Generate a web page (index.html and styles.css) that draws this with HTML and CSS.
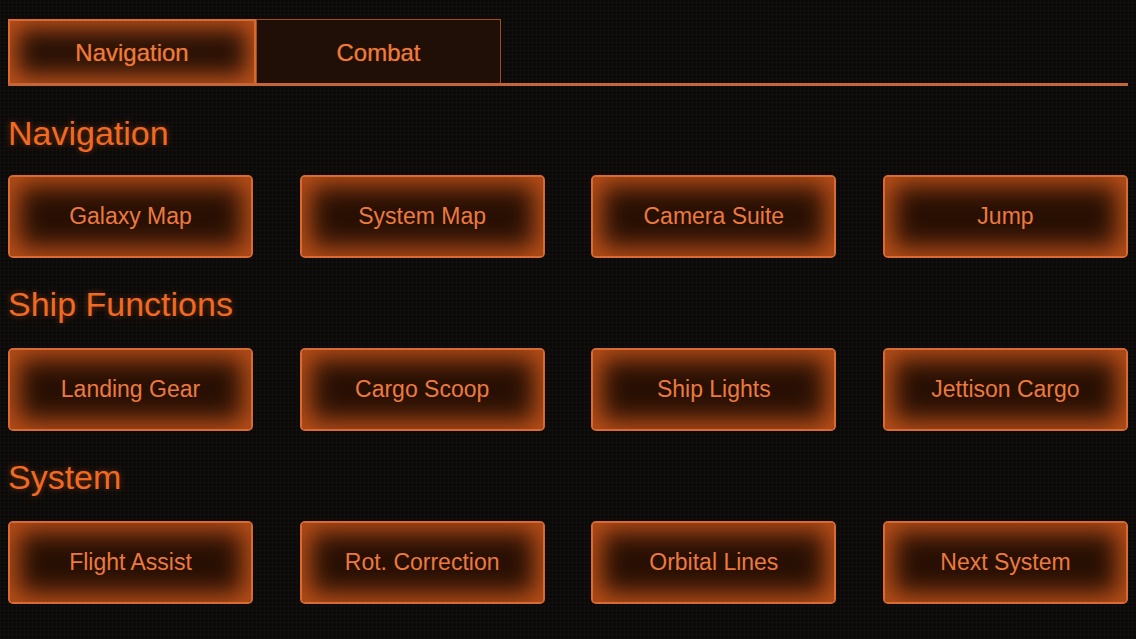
FILE: index.html
```html
<!DOCTYPE html>
<html>
<head>
<meta charset="utf-8">
<link rel="stylesheet" href="styles.css">
</head>
<body>
<div class="page">
  <div class="tabs">
    <div class="tab active">Navigation</div>
    <div class="tab">Combat</div>
  </div>
  <section class="section">
    <h2 class="heading first">Navigation</h2>
    <div class="grid">
      <div class="btn">Galaxy Map</div>
      <div class="btn">System Map</div>
      <div class="btn">Camera Suite</div>
      <div class="btn">Jump</div>
    </div>
  </section>
  <section class="section">
    <h2 class="heading">Ship Functions</h2>
    <div class="grid">
      <div class="btn">Landing Gear</div>
      <div class="btn">Cargo Scoop</div>
      <div class="btn">Ship Lights</div>
      <div class="btn">Jettison Cargo</div>
    </div>
  </section>
  <section class="section">
    <h2 class="heading">System</h2>
    <div class="grid">
      <div class="btn">Flight Assist</div>
      <div class="btn">Rot. Correction</div>
      <div class="btn">Orbital Lines</div>
      <div class="btn">Next System</div>
    </div>
  </section>
</div>
</body>
</html>
```
FILE: styles.css
```css
html, body {
  margin: 0;
  padding: 0;
}
body {
  background-color: #0c0a08;
  background-image:
    repeating-linear-gradient(0deg, rgba(255,255,255,0.018) 0 1px, transparent 1px 4px),
    repeating-linear-gradient(90deg, rgba(255,255,255,0.018) 0 1px, transparent 1px 4px);
  font-family: "Liberation Sans", Arial, sans-serif;
  color: #ee7634;
  width: 1136px;
  height: 639px;
  overflow: hidden;
}
.page {
  padding: 19px 8px 0 8px;
}
.tabs {
  display: flex;
  border-bottom: 3px solid #c4653a;
  height: 64px;
}
.tab {
  width: 245px;
  height: 64px;
  box-sizing: border-box;
  display: flex;
  align-items: center;
  justify-content: center;
  padding-top: 2px;
  font-size: 24px;
  color: #f07a38;
  background: #1f0f06;
  border: 1px solid #a44b1d;
  border-bottom: none;
  text-shadow: 0 0 1px rgba(240,122,56,0.6);
}
.tab.active {
  width: 248px;
  background: #2a1206;
  border: 2px solid #d86a30;
  border-bottom: none;
  box-shadow: inset 0 0 22px 8px rgba(214,92,30,0.85);
}
.section {
  display: flex;
  flex-direction: column;
}
.heading {
  margin: 26px 0 24px 0;
  line-height: 40px;
  height: 40px;
  font-size: 34px;
  font-weight: normal;
  color: #f26a22;
  text-shadow: 0 0 6px rgba(240,100,30,0.45);
}
.heading.first {
  margin-top: 27px;
  margin-bottom: 22px;
}
.grid {
  display: flex;
  justify-content: space-between;
}
.btn {
  width: 245px;
  height: 83px;
  box-sizing: border-box;
  border: 2px solid #d86a34;
  border-radius: 5px;
  background: #281004;
  box-shadow: inset 0 0 24px 9px rgba(212,90,28,0.85);
  display: flex;
  align-items: center;
  justify-content: center;
  font-size: 23px;
  color: #ec7a3e;
}
```
